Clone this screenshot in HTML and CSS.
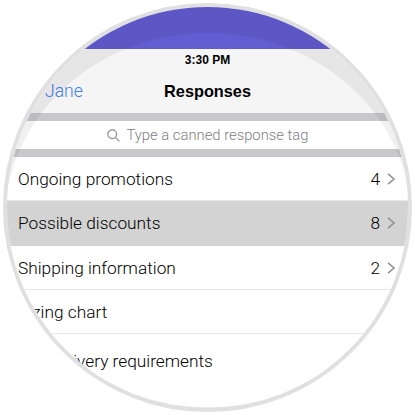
FILE: index.html
```html
<html>
<head>
<title>Responses</title>
<link rel="stylesheet" href="styles.css">
</head>
<body>
<div class="lens">
	<div class="appTop"></div>
	<div class="navBar">
		<div class="statusBar">3:30 PM</div>
		<div class="navRow">
			<span class="backLink">Jane</span>
			<span class="navTitle">Responses</span>
		</div>
	</div>
	<div class="searchBox">
		<svg class="searchIcon" width="13" height="13" viewBox="0 0 13 13"><circle cx="5.2" cy="5.2" r="4.4"/><line x1="8.4" y1="8.4" x2="12.4" y2="12.4"/></svg>
		<span>Type a canned response tag</span>
	</div>
	<div class="list">
		<div class="row">
			<span class="rowName">Ongoing promotions</span>
			<span class="rowCount">4</span>
			<svg class="chevron" width="8" height="12" viewBox="0 0 8 12"><polyline points="1,0.8 7,6 1,11.2"/></svg>
		</div>
		<div class="row selected">
			<span class="rowName">Possible discounts</span>
			<span class="rowCount">8</span>
			<svg class="chevron" width="8" height="12" viewBox="0 0 8 12"><polyline points="1,0.8 7,6 1,11.2"/></svg>
		</div>
		<div class="row">
			<span class="rowName">Shipping information</span>
			<span class="rowCount">2</span>
			<svg class="chevron" width="8" height="12" viewBox="0 0 8 12"><polyline points="1,0.8 7,6 1,11.2"/></svg>
		</div>
		<div class="row">
			<span class="rowName">Sizing chart</span>
		</div>
		<div class="row lastRow">
			<span class="rowName">Delivery requirements</span>
		</div>
	</div>
	<div class="glare"></div>
</div>
</body>
</html>
```

FILE: styles.css
```css
html, body {margin: 0; padding: 0; background-color: #fff;}
body {width: 415px; height: 415px; overflow: hidden; font-family: Roboto, "Liberation Sans", Arial, sans-serif; color: #000;}

.lens {
	position: relative;
	box-sizing: border-box;
	width: 409px;
	height: 409px;
	margin: 3px;
	border: 4px solid #e0e0e0;
	border-radius: 50%;
	overflow: hidden;
	background-color: #fff;
}

.appTop {height: 42px; background-color: #625dd1;}

.navBar {height: 64px; background-color: #f5f5f5;}
.statusBar {padding-top: 4px; height: 15px; line-height: 15px; text-align: center; font-family: "Liberation Sans", Arial, sans-serif; font-size: 12px; font-weight: bold;}
.navRow {position: relative; margin-top: 8px; height: 30px; line-height: 30px; text-align: center;}
.backLink {position: absolute; left: 38px; top: 0; font-size: 17.6px; font-weight: 300; color: #3f7cf5;}
.navTitle {font-family: "Liberation Sans", Arial, sans-serif; font-size: 16.3px; font-weight: bold;}

.searchBox {
	display: flex;
	justify-content: center;
	align-items: center;
	gap: 7px;
	height: 28px;
	background-color: #fff;
	border-top: 8px solid #c8c8cc;
	border-bottom: 8px solid #c8c8cc;
	font-size: 14.8px;
	font-weight: 300;
	color: #808084;
}
.searchIcon {fill: none; stroke: #8e8e93; stroke-width: 1.2;}

.row {
	display: flex;
	align-items: center;
	box-sizing: border-box;
	height: 44px;
	padding: 0 13px 0 11px;
	border-bottom: 1px solid #e8e8e8;
	font-size: 17.3px;
	font-weight: 300;
	background-color: #fff;
}
.row.selected {background-color: #d3d3d3; border-bottom-color: #d3d3d3; height: 45px;}
.row.lastRow {height: 50px; padding-top: 4px; padding-left: 42px; border-bottom: 0;}
.rowName {flex: 1;}
.rowCount {margin-right: 7px;}
.chevron {fill: none; stroke: #949498; stroke-width: 1.6;}

.glare {
	position: absolute;
	left: -2px;
	top: 26px;
	width: 406px;
	height: 374px;
	border-radius: 50%;
	box-shadow: 0 0 0 220px rgba(0,0,0,0.06);
}
```
